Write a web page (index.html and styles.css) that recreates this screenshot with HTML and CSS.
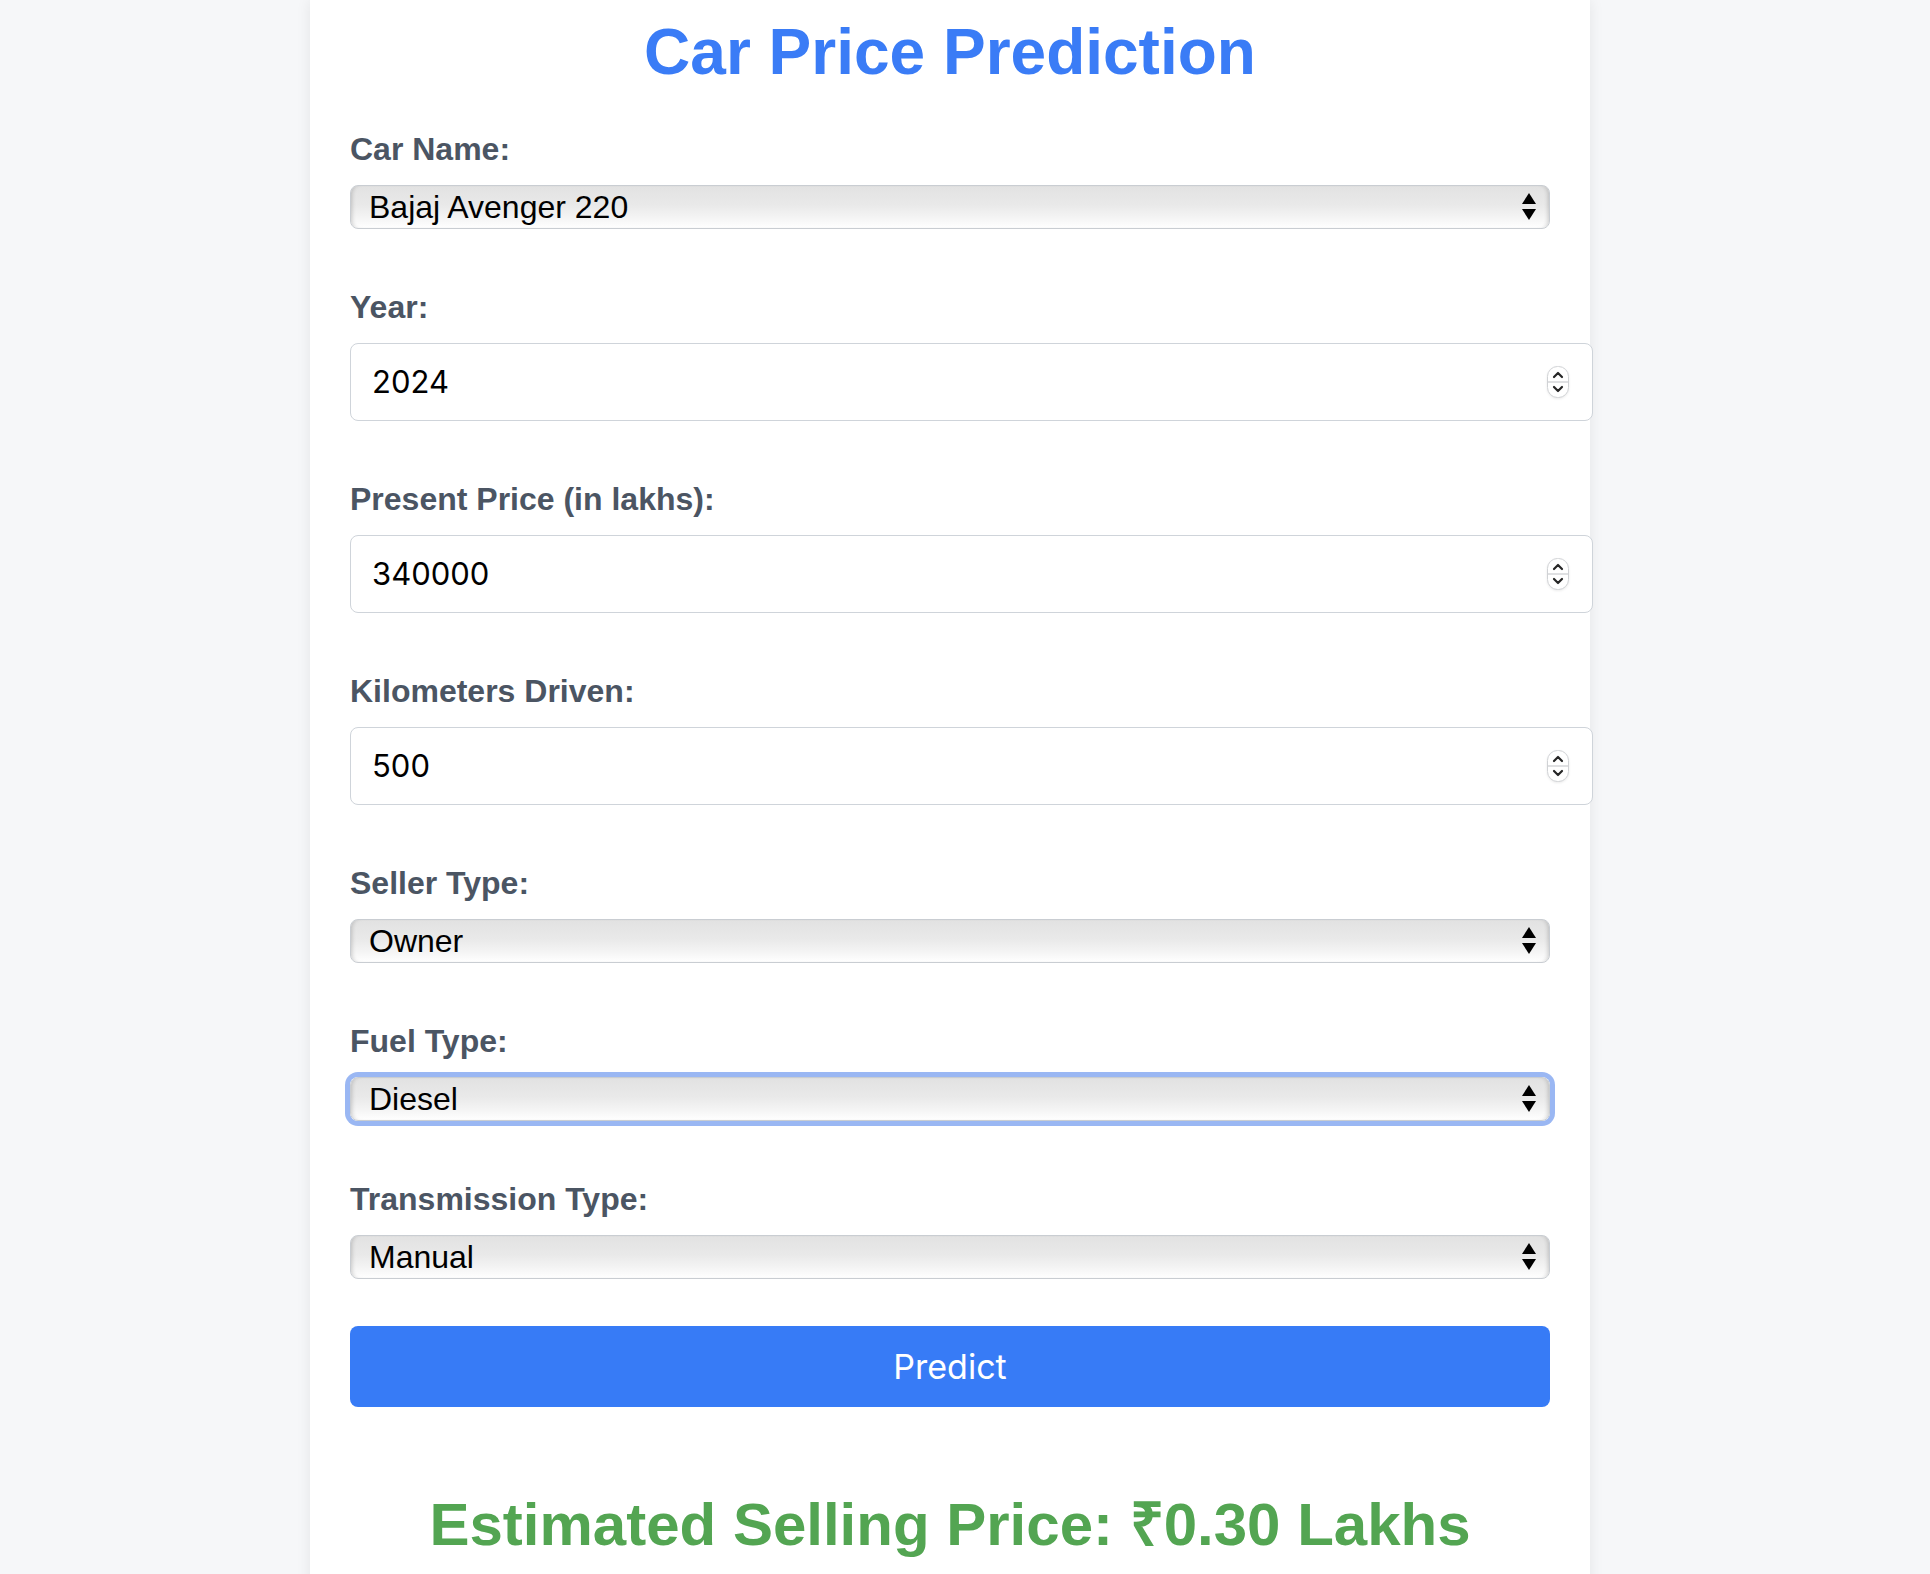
FILE: index.html
```html
<!DOCTYPE html>
<html lang="en">
<head>
<meta charset="utf-8">
<title>Car Price Prediction</title>
<link rel="stylesheet" href="styles.css">
</head>
<body>
<div class="page">
  <main class="card">
    <h1 class="title">Car Price Prediction</h1>
    <form class="form">
      <div class="field">
        <label class="label" for="car">Car Name:</label>
        <div class="select-wrap">
          <select id="car" class="select"><option>Bajaj Avenger 220</option></select>
          <svg class="select-arrows" width="14" height="28" viewBox="0 0 14 28"><polygon points="7,0 14,11 0,11" fill="#000"/><polygon points="0,16 14,16 7,27" fill="#000"/></svg>
        </div>
      </div>
      <div class="field">
        <label class="label" for="year">Year:</label>
        <div class="num-wrap">
          <input id="year" class="input" type="number" value="2024">
          <svg class="spinner" width="22" height="32" viewBox="0 0 22 32"><rect x="0.5" y="0.5" width="21" height="31" rx="10" fill="#fff" stroke="#d0d2d5"/><line x1="1" y1="16" x2="21" y2="16" stroke="#dfe0e2" stroke-width="2"/><polyline points="7,11 11,7 15,11" fill="none" stroke="#262626" stroke-width="2.2" stroke-linecap="round" stroke-linejoin="round"/><polyline points="7,21 11,25 15,21" fill="none" stroke="#262626" stroke-width="2.2" stroke-linecap="round" stroke-linejoin="round"/></svg>
        </div>
      </div>
      <div class="field">
        <label class="label" for="price">Present Price (in lakhs):</label>
        <div class="num-wrap">
          <input id="price" class="input" type="number" value="340000">
          <svg class="spinner" width="22" height="32" viewBox="0 0 22 32"><rect x="0.5" y="0.5" width="21" height="31" rx="10" fill="#fff" stroke="#d0d2d5"/><line x1="1" y1="16" x2="21" y2="16" stroke="#dfe0e2" stroke-width="2"/><polyline points="7,11 11,7 15,11" fill="none" stroke="#262626" stroke-width="2.2" stroke-linecap="round" stroke-linejoin="round"/><polyline points="7,21 11,25 15,21" fill="none" stroke="#262626" stroke-width="2.2" stroke-linecap="round" stroke-linejoin="round"/></svg>
        </div>
      </div>
      <div class="field">
        <label class="label" for="km">Kilometers Driven:</label>
        <div class="num-wrap">
          <input id="km" class="input" type="number" value="500">
          <svg class="spinner" width="22" height="32" viewBox="0 0 22 32"><rect x="0.5" y="0.5" width="21" height="31" rx="10" fill="#fff" stroke="#d0d2d5"/><line x1="1" y1="16" x2="21" y2="16" stroke="#dfe0e2" stroke-width="2"/><polyline points="7,11 11,7 15,11" fill="none" stroke="#262626" stroke-width="2.2" stroke-linecap="round" stroke-linejoin="round"/><polyline points="7,21 11,25 15,21" fill="none" stroke="#262626" stroke-width="2.2" stroke-linecap="round" stroke-linejoin="round"/></svg>
        </div>
      </div>
      <div class="field">
        <label class="label" for="seller">Seller Type:</label>
        <div class="select-wrap">
          <select id="seller" class="select"><option>Owner</option></select>
          <svg class="select-arrows" width="14" height="28" viewBox="0 0 14 28"><polygon points="7,0 14,11 0,11" fill="#000"/><polygon points="0,16 14,16 7,27" fill="#000"/></svg>
        </div>
      </div>
      <div class="field">
        <label class="label" for="fuel">Fuel Type:</label>
        <div class="select-wrap">
          <select id="fuel" class="select select-focused"><option>Diesel</option></select>
          <svg class="select-arrows" width="14" height="28" viewBox="0 0 14 28"><polygon points="7,0 14,11 0,11" fill="#000"/><polygon points="0,16 14,16 7,27" fill="#000"/></svg>
        </div>
      </div>
      <div class="field field-last">
        <label class="label" for="trans">Transmission Type:</label>
        <div class="select-wrap">
          <select id="trans" class="select"><option>Manual</option></select>
          <svg class="select-arrows" width="14" height="28" viewBox="0 0 14 28"><polygon points="7,0 14,11 0,11" fill="#000"/><polygon points="0,16 14,16 7,27" fill="#000"/></svg>
        </div>
      </div>
      <button type="button" class="button">Predict</button>
    </form>
    <h2 class="result">Estimated Selling Price: ₹0.30 Lakhs</h2>
  </main>
</div>
</body>
</html>
```
FILE: styles.css
```css
html, body {
  margin: 0;
  padding: 0;
}
body {
  background: #f6f7f9;
  font-family: "Liberation Sans", Arial, sans-serif;
  overflow: hidden;
  height: 1574px;
}
.page {
  padding-right: 30px;
  height: 100%;
}
.card {
  max-width: 1200px;
  margin: 0 auto;
  padding: 15px 40px 40px;
  background: #ffffff;
  min-height: 100%;
  box-shadow: 0 0 14px rgba(0, 0, 0, 0.08);
}
.title {
  margin: 0 0 42px;
  font-size: 64px;
  line-height: 74px;
  font-weight: 700;
  color: #3a7cf6;
  text-align: center;
}
.form {
  display: flex;
  flex-direction: column;
}
.field {
  margin-bottom: 60px;
}
.field-last {
  margin-bottom: 47px;
}
.label {
  display: block;
  margin-bottom: 18px;
  font-size: 32px;
  line-height: 36px;
  font-weight: 700;
  color: #4b5563;
}
.select-wrap {
  position: relative;
}
.select {
  -webkit-appearance: none;
  appearance: none;
  display: block;
  box-sizing: border-box;
  width: 100%;
  height: 44px;
  margin: 0;
  padding: 0 40px 0 18px;
  font-family: "Liberation Sans", Arial, sans-serif;
  font-size: 32px;
  color: #000;
  border: 1.5px solid #c9cdd2;
  border-radius: 8px;
  background: linear-gradient(#e2e2e2 0%, #e9e9e9 45%, #f4f4f4 75%, #ffffff 100%);
  box-shadow: inset 4px 0 4px -3px rgba(0, 0, 0, 0.18), inset -4px 0 4px -3px rgba(0, 0, 0, 0.18);
  outline: none;
}
.select-focused {
  box-shadow: 0 0 0 5px #9ab7f3, inset 4px 0 4px -3px rgba(0, 0, 0, 0.18), inset -4px 0 4px -3px rgba(0, 0, 0, 0.18);
}
.select-arrows {
  position: absolute;
  right: 14px;
  top: 50%;
  transform: translateY(-50%);
  pointer-events: none;
}
.num-wrap {
  position: relative;
}
.input {
  display: block;
  width: 100%;
  margin: 0;
  padding: 20px 20px 20px 21px;
  font-family: "Inter", "Liberation Sans", sans-serif;
  font-size: 31px;
  line-height: 36px;
  color: #000;
  background: #fff;
  border: 1px solid #cfd4da;
  border-radius: 8px;
  outline: none;
  -moz-appearance: textfield;
}
.input::-webkit-inner-spin-button,
.input::-webkit-outer-spin-button {
  -webkit-appearance: none;
  margin: 0;
}
.spinner {
  position: absolute;
  right: -19px;
  top: 50%;
  transform: translateY(-50%);
  filter: drop-shadow(0 1px 1px rgba(0, 0, 0, 0.08));
}
.button {
  display: block;
  width: 100%;
  height: 81px;
  margin: 0;
  padding: 0;
  border: none;
  border-radius: 8px;
  background: #377bf6;
  color: #fff;
  font-family: "Inter", "Liberation Sans", sans-serif;
  font-size: 34px;
  cursor: pointer;
}
.result {
  margin: 83px 0 0;
  font-size: 60px;
  line-height: 69px;
  font-weight: 700;
  color: #53a552;
  text-align: center;
}
```
